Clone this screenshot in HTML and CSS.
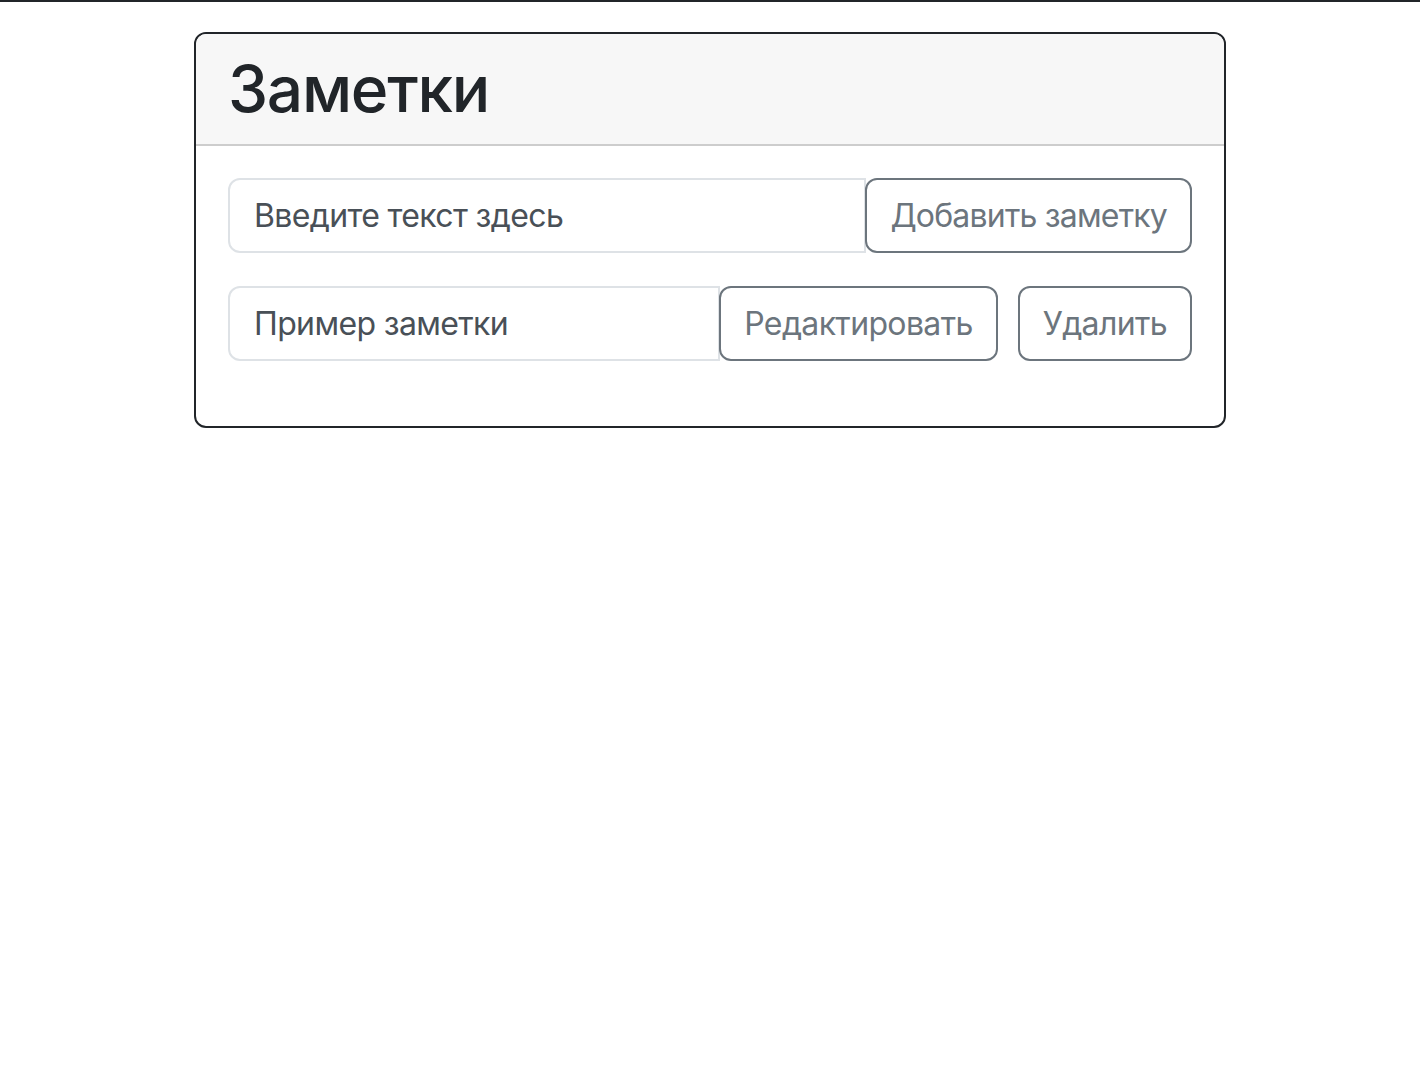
FILE: index.html
```html
<!DOCTYPE html>
<html lang="ru">
<head>
<meta charset="utf-8">
<title>Заметки</title>
<link rel="stylesheet" href="styles.css">
</head>
<body>
<div class="topline"></div>
<main class="page">
  <section class="card">
    <header class="card-header">
      <h2 class="title">Заметки</h2>
    </header>
    <div class="card-body">
      <div class="row">
        <input class="field field-joined" type="text" placeholder="Введите текст здесь">
        <button class="btn btn-add">Добавить заметку</button>
      </div>
      <div class="row">
        <input class="field field-joined" type="text" value="Пример заметки" readonly>
        <button class="btn">Редактировать</button>
        <button class="btn btn-spaced">Удалить</button>
      </div>
    </div>
  </section>
</main>
</body>
</html>
```
FILE: styles.css
```css
* { box-sizing: border-box; }
html, body { margin: 0; padding: 0; background: #fff; }
body {
  font-family: Inter, "Liberation Sans", Arial, sans-serif;
  color: #212529;
}
.topline {
  height: 2px;
  background: #212529;
}
.page {
  width: 1032px;
  margin: 30px auto 0;
}
.card {
  border: 2px solid #212529;
  border-radius: 12px;
  overflow: hidden;
  background: #fff;
}
.card-header {
  background: #f7f7f7;
  border-bottom: 2px solid #cdcdcd;
  padding: 17px 32px 16px;
}
.title {
  margin: 0;
  font-size: 64px;
  font-weight: 500;
  line-height: 1.2;
  letter-spacing: -0.02em;
  color: #212529;
}
.card-body {
  padding: 32px 32px 33px;
}
.row {
  display: flex;
  margin-bottom: 33px;
}
.row:last-child { margin-bottom: 32px; }
.field {
  flex: 1 1 auto;
  min-width: 0;
  height: 75px;
  font-family: inherit;
  font-size: 32px;
  line-height: 1.5;
  letter-spacing: -0.02em;
  padding: 12px 24px;
  border: 2px solid #dee2e6;
  border-radius: 12px;
  color: #495057;
  background: #fff;
  outline: none;
}
.field::placeholder { color: #495057; opacity: 1; }
.field-joined {
  border-top-right-radius: 0;
  border-bottom-right-radius: 0;
}
.btn {
  flex: 0 0 auto;
  height: 75px;
  font-family: inherit;
  font-size: 32px;
  line-height: 1.5;
  letter-spacing: -0.02em;
  padding: 12px 23px;
  border: 2px solid #6c757d;
  border-radius: 12px;
  color: #6c757d;
  background: transparent;
  margin-left: -1px;
}
.btn-add { letter-spacing: -0.025em; }
.btn-spaced { margin-left: 20px; }
```
